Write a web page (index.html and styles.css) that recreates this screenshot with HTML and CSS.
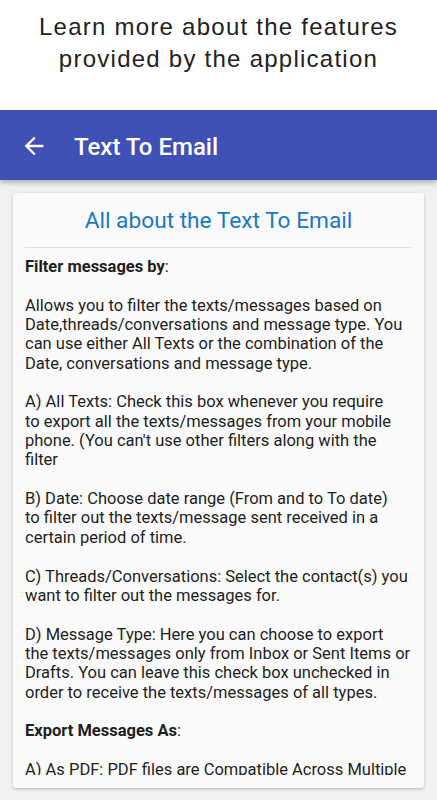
FILE: index.html
```html
<!DOCTYPE html>
<html lang="en">
<head>
    <meta charset="UTF-8">
    <meta name="viewport" content="width=device-width, initial-scale=1.0">
    <title>Text To Email - About</title>
    <link rel="stylesheet" href="styles.css">
</head>
<body>
    <div class="caption">
        <p>Learn more about the features<br>provided by the application</p>
    </div>

    <div class="appbar">
        <svg class="back" viewBox="0 0 24 24" width="28" height="28">
            <path d="M20 11H7.83l5.59-5.59L12 4l-8 8 8 8 1.41-1.41L7.83 13H20v-2z" fill="#fff"/>
        </svg>
        <h1>Text To Email</h1>
    </div>

    <div class="main">
        <div class="card">
            <h2>All about the Text To Email</h2>
            <div class="scroll">
                <!-- line breaks follow the app's own wrapping -->
                <p><b>Filter messages by</b>:</p>
                <p>Allows you to filter the texts/messages based on<br>Date,threads/conversations and message type. You<br>can use either All Texts or the combination of the<br>Date, conversations and message type.</p>
                <p>A) All Texts: Check this box whenever you require<br>to export all the texts/messages from your mobile<br>phone. (You can't use other filters along with the<br>filter</p>
                <p>B) Date: Choose date range (From and to To date)<br>to filter out the texts/message sent received in a<br>certain period of time.</p>
                <p>C) Threads/Conversations: Select the contact(s) you<br>want to filter out the messages for.</p>
                <p>D) Message Type: Here you can choose to export<br>the texts/messages only from Inbox or Sent Items or<br>Drafts. You can leave this check box unchecked in<br>order to receive the texts/messages of all types.</p>
                <p><b>Export Messages As</b>:</p>
                <p>A) As PDF: PDF files are Compatible Across Multiple<br>Platforms and can be viewed on any device.</p>
            </div>
        </div>
    </div>
</body>
</html>
```

FILE: styles.css
```css
*{
    margin: 0;
    padding: 0;
    box-sizing: border-box;
}
body{
    width: 437px;
    height: 800px;
    overflow: hidden;
    background: #fff;
    font-family: Roboto, "Liberation Sans", sans-serif;
}
.caption{
    height: 110px;
    padding-top: 11px;
    text-align: center;
    font-family: "Liberation Sans", Arial, sans-serif;
    font-size: 24px;
    letter-spacing: 1.25px;
    line-height: 32px;
    color: #222;
}
.appbar{
    position: relative;
    z-index: 1;
    height: 70px;
    display: flex;
    align-items: center;
    background: #3f51b5;
    box-shadow: 0 3px 5px rgba(0,0,0,0.25);
}
.appbar .back{
    margin-left: 20px;
    margin-top: 2px;
    flex-shrink: 0;
}
.appbar h1{
    margin-left: 26px;
    padding-top: 4px;
    font-size: 24px;
    font-weight: 500;
    color: #fff;
}
.main{
    height: 620px;
    padding: 13px 13px 12px 13px;
    background: #f1f1f1;
}
.card{
    height: 595px;
    display: flex;
    flex-direction: column;
    padding: 14px 12px 13px 12px;
    background: #fafafa;
    border-radius: 3px;
    box-shadow: 0 1px 3px rgba(0,0,0,0.25);
}
.card h2{
    font-size: 22.7px;
    font-weight: 400;
    line-height: 28px;
    text-align: center;
    color: #1a79c6;
    padding-bottom: 12px;
    border-bottom: 1px solid #e4e4e4;
}
.scroll{
    flex: 1;
    overflow: hidden;
    padding-top: 9px;
    font-size: 16.5px;
    line-height: 19.35px;
    color: #1e1e1e;
}
.scroll p{
    white-space: nowrap;
    margin-bottom: 19.35px;
}
```
